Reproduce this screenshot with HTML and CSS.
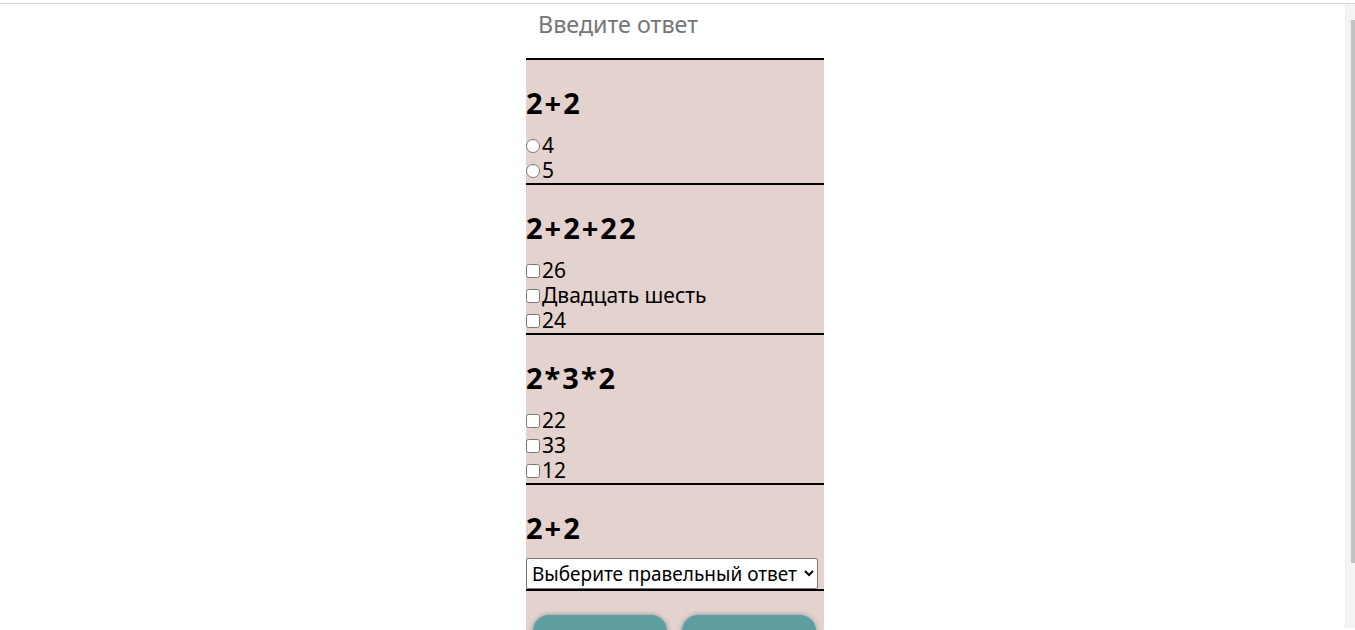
FILE: index.html
```html
<!DOCTYPE html>
<html lang="ru">
<head>
<meta charset="utf-8">
<title>Тест</title>
<link rel="stylesheet" href="styles.css">
</head>
<body>
<div class="frame">
  <div class="page">
    <form class="quiz">
      <input class="answer" type="text" placeholder="Введите ответ">
      <section class="question">
        <h2 class="title">2+2</h2>
        <label class="option"><input class="mark" type="radio" name="q1">4</label>
        <label class="option"><input class="mark" type="radio" name="q1">5</label>
      </section>
      <section class="question">
        <h2 class="title">2+2+22</h2>
        <label class="option"><input class="mark" type="checkbox">26</label>
        <label class="option"><input class="mark" type="checkbox">Двадцать шесть</label>
        <label class="option"><input class="mark" type="checkbox">24</label>
      </section>
      <section class="question">
        <h2 class="title">2*3*2</h2>
        <label class="option"><input class="mark" type="checkbox">22</label>
        <label class="option"><input class="mark" type="checkbox">33</label>
        <label class="option"><input class="mark" type="checkbox">12</label>
      </section>
      <section class="question">
        <h2 class="title">2+2</h2>
        <select class="choice">
          <option>Выберите правельный ответ</option>
          <option>4</option>
          <option>5</option>
        </select>
      </section>
      <div class="actions">
        <button class="btn" type="submit"></button>
        <button class="btn" type="reset"></button>
      </div>
    </form>
  </div>
</div>
<div class="scrollbar"><div class="thumb"></div></div>
</body>
</html>
```
FILE: styles.css
```css
html, body {
  margin: 0;
  padding: 0;
  height: 100%;
  overflow: hidden;
  background: #ffffff;
}
body {
  font-family: "Noto Sans", "Open Sans", sans-serif;
  color: #000;
}
.frame {
  height: 630px;
  box-sizing: border-box;
  border-top: 1px solid #d4d4d4;
  margin-top: 3px;
  overflow: hidden;
}
.page {
  width: 1350px;
}
.quiz {
  width: 298px;
  margin: 0 auto;
  background: #e4d2cf;
  display: flex;
  flex-direction: column;
}
.answer {
  display: block;
  box-sizing: border-box;
  width: 298px;
  height: 56px;
  margin: 0;
  border: none;
  border-bottom: 2px solid #000;
  padding: 0 12px 14px;
  background: #fff;
  font-family: inherit;
  font-size: 23.3px;
  outline: none;
}
.answer::placeholder {
  color: #767676;
}
.question {
  border-bottom: 2px solid #000;
  display: flex;
  flex-direction: column;
}
.title {
  margin: 23px 0 10px;
  font-size: 29px;
  line-height: 40px;
  font-weight: 700;
  letter-spacing: 2px;
}
.option {
  display: flex;
  align-items: center;
  height: 25px;
  font-size: 21px;
  line-height: 25px;
}
.mark {
  width: 14px;
  height: 14px;
  margin: 0 2px 0 0;
}
.choice {
  width: 292px;
  height: 31px;
  margin: 0;
  font-family: inherit;
  font-size: 19px;
  background: #fff;
  border: 1px solid #767676;
  border-radius: 2px;
  padding: 0 1px;
  color: #000;
}
.actions {
  display: flex;
  gap: 15px;
  padding: 24px 8px 30px 7px;
}
.btn {
  width: 134px;
  height: 44px;
  border: none;
  border-radius: 16px;
  background: #5f9ea0;
  box-shadow: 0 0 5px rgba(60, 110, 110, 0.6);
}
.scrollbar {
  position: fixed;
  top: 4px;
  right: 0;
  width: 9px;
  height: 624px;
  background: #f4f4f4;
  border-left: 1px solid #f0f0f0;
}
.thumb {
  margin: 16px 0 0 5px;
  width: 4px;
  height: 543px;
  background: #c2c2c2;
}
```
